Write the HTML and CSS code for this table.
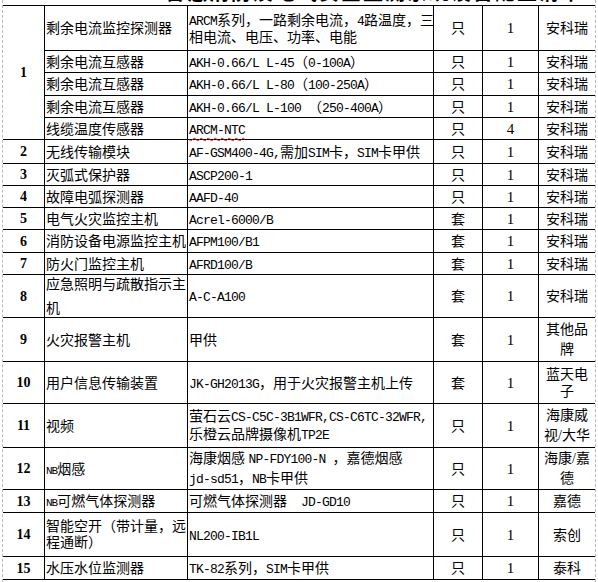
FILE: index.html
```html
<!DOCTYPE html>
<html lang="zh">
<head>
<meta charset="utf-8">
<title>设备配置清单</title>
<link rel="stylesheet" href="styles.css">
</head>
<body>
<div class="sheet">
  <div class="title"><span>智慧消防及电气安全监测系统设备配置清单</span></div>
  <table class="grid">
    <colgroup>
      <col class="c-no"><col class="c-name"><col class="c-model"><col class="c-unit"><col class="c-qty"><col class="c-brand">
    </colgroup>
    <tbody>
      <tr class="h46 first">
        <td class="no" rowspan="5">1</td>
        <td>剩余电流监控探测器</td>
        <td><span class="en">ARCM</span>系列，一路剩余电流，<span class="en">4</span>路温度，三<br>相电流、电压、功率、电能</td>
        <td class="ctr">只</td><td class="ctr qty">1</td><td class="ctr">安科瑞</td>
      </tr>
      <tr class="h22">
        <td>剩余电流互感器</td>
        <td><span class="en">AKH-0.66/L L-45</span>（<span class="en">0-100A</span>）</td>
        <td class="ctr">只</td><td class="ctr qty">1</td><td class="ctr">安科瑞</td>
      </tr>
      <tr class="h23">
        <td>剩余电流互感器</td>
        <td><span class="en">AKH-0.66/L L-80</span>（<span class="en">100-250A</span>）</td>
        <td class="ctr">只</td><td class="ctr qty">1</td><td class="ctr">安科瑞</td>
      </tr>
      <tr class="h22">
        <td>剩余电流互感器</td>
        <td><span class="en">AKH-0.66/L L-100 </span>（<span class="en">250-400A</span>）</td>
        <td class="ctr">只</td><td class="ctr qty">1</td><td class="ctr">安科瑞</td>
      </tr>
      <tr class="h22">
        <td>线缆温度传感器</td>
        <td><span class="en typo">ARCM-NTC</span></td>
        <td class="ctr">只</td><td class="ctr qty">4</td><td class="ctr">安科瑞</td>
      </tr>
      <tr class="h24">
        <td class="no">2</td>
        <td>无线传输模块</td>
        <td><span class="en">AF-GSM400-4G,</span>需加<span class="en">SIM</span>卡，<span class="en">SIM</span>卡甲供</td>
        <td class="ctr">只</td><td class="ctr qty">1</td><td class="ctr">安科瑞</td>
      </tr>
      <tr class="h22">
        <td class="no">3</td>
        <td>灭弧式保护器</td>
        <td><span class="en">ASCP200-1</span></td>
        <td class="ctr">只</td><td class="ctr qty">1</td><td class="ctr">安科瑞</td>
      </tr>
      <tr class="h22">
        <td class="no">4</td>
        <td>故障电弧探测器</td>
        <td><span class="en">AAFD-40</span></td>
        <td class="ctr">只</td><td class="ctr qty">1</td><td class="ctr">安科瑞</td>
      </tr>
      <tr class="h22">
        <td class="no">5</td>
        <td>电气火灾监控主机</td>
        <td><span class="en">Acrel-6000/B</span></td>
        <td class="ctr">套</td><td class="ctr qty">1</td><td class="ctr">安科瑞</td>
      </tr>
      <tr class="h23">
        <td class="no">6</td>
        <td>消防设备电源监控主机</td>
        <td><span class="en">AFPM100/B1</span></td>
        <td class="ctr">套</td><td class="ctr qty">1</td><td class="ctr">安科瑞</td>
      </tr>
      <tr class="h22">
        <td class="no">7</td>
        <td>防火门监控主机</td>
        <td><span class="en">AFRD100/B</span></td>
        <td class="ctr">套</td><td class="ctr qty">1</td><td class="ctr">安科瑞</td>
      </tr>
      <tr class="h43">
        <td class="no">8</td>
        <td><div class="spread"><div>应急照明与疏散指示主</div><div>机</div></div></td>
        <td><span class="en">A-C-A100</span></td>
        <td class="ctr">套</td><td class="ctr qty">1</td><td class="ctr">安科瑞</td>
      </tr>
      <tr class="h44">
        <td class="no">9</td>
        <td>火灾报警主机</td>
        <td>甲供</td>
        <td class="ctr">套</td><td class="ctr qty">1</td><td class="ctr lh20">其他品<br>牌</td>
      </tr>
      <tr class="h42">
        <td class="no">10</td>
        <td>用户信息传输装置</td>
        <td><span class="en">JK-GH2013G</span>，用于火灾报警主机上传</td>
        <td class="ctr">套</td><td class="ctr qty">1</td><td class="ctr">蓝天电<br>子</td>
      </tr>
      <tr class="h44">
        <td class="no">11</td>
        <td>视频</td>
        <td class="lh18">萤石云<span class="en">CS-C5C-3B1WFR,CS-C6TC-32WFR,</span><br>乐橙云品牌摄像机<span class="en">TP2E</span></td>
        <td class="ctr">只</td><td class="ctr qty">1</td><td class="ctr lh20">海康威<br>视/大华</td>
      </tr>
      <tr class="h41">
        <td class="no">12</td>
        <td><span class="en sm">NB</span>烟感</td>
        <td class="lh20">海康烟感 <span class="en">NP-FDY100-N </span>，嘉德烟感<br><span class="en">jd-sd51</span>，<span class="en">NB</span>卡甲供</td>
        <td class="ctr">只</td><td class="ctr qty">1</td><td class="ctr lh20">海康/嘉<br>德</td>
      </tr>
      <tr class="h23">
        <td class="no">13</td>
        <td><span class="en sm">NB</span>可燃气体探测器</td>
        <td>可燃气体探测器<span class="en">&nbsp;&nbsp;JD-GD10</span></td>
        <td class="ctr">只</td><td class="ctr qty">1</td><td class="ctr">嘉德</td>
      </tr>
      <tr class="h44">
        <td class="no">14</td>
        <td class="lh16">智能空开（带计量，远<br>程通断）</td>
        <td><span class="en">NL200-IB1L</span></td>
        <td class="ctr">只</td><td class="ctr qty">1</td><td class="ctr">索创</td>
      </tr>
      <tr class="h23">
        <td class="no">15</td>
        <td>水压水位监测器</td>
        <td><span class="en">TK-82</span>系列，<span class="en">SIM</span>卡甲供</td>
        <td class="ctr">只</td><td class="ctr qty">1</td><td class="ctr">泰科</td>
      </tr>
    </tbody>
  </table>
</div>
</body>
</html>
```

FILE: styles.css
```css
html, body {
  margin: 0;
  padding: 0;
  background: #ffffff;
}

.sheet {
  margin-left: 2px;
  width: 592px;
  min-height: 582px;
  border-left: 1px dashed #b8b8b8;
  border-right: 1px dashed #b8b8b8;
  box-sizing: content-box;
}

.title {
  height: 5px;
  overflow: hidden;
  padding-left: 162px;
}

.title span {
  display: block;
  margin-top: -18px;
  font-family: "Noto Sans CJK SC", sans-serif;
  font-weight: 700;
  font-size: 20px;
  line-height: 20px;
  letter-spacing: 2px;
  color: #000;
  white-space: nowrap;
}

.grid {
  border-collapse: separate;
  border-spacing: 0;
  table-layout: fixed;
  width: 592px;
}

.c-no { width: 42px; }
.c-name { width: 143px; }
.c-model { width: 246px; }
.c-unit { width: 49px; }
.c-qty { width: 56px; }
.c-brand { width: 56px; }

.grid td {
  box-sizing: border-box;
  border-right: 1px solid #000;
  border-bottom: 1px solid #000;
  padding: 1px 0 0 1px;
  vertical-align: middle;
  font-family: "Liberation Serif", "Noto Sans CJK SC", sans-serif;
  font-weight: 400;
  font-size: 14px;
  line-height: 17px;
  color: #000;
  white-space: nowrap;
  overflow: visible;
}

.grid td:last-child {
  border-right: none;
}

.grid tr.first td {
  border-top: 1px solid #000;
}

.grid td.no {
  text-align: center;
  padding: 0;
  font-weight: 700;
}

.grid td.ctr {
  text-align: center;
  padding: 1px 0 0 0;
}

.grid td.qty {
  font-size: 15px;
}

.grid td.lh16 { line-height: 16px; }
.grid td.lh18 { line-height: 18px; }
.grid td.lh20 { line-height: 20px; }

.spread {
  height: 41px;
  display: flex;
  flex-direction: column;
  justify-content: space-between;
}

.en {
  font-family: "Liberation Mono", monospace;
  font-weight: 400;
  font-size: 13px;
  line-height: 10px;
  letter-spacing: -0.8px;
}

.en.sm {
  font-size: 11px;
  letter-spacing: -1px;
}

.typo {
  text-decoration: underline wavy #e02020;
  text-decoration-thickness: 1px;
  text-underline-offset: 3px;
}

tr.h22 { height: 22px; }
tr.h23 { height: 23px; }
tr.h24 { height: 24px; }
tr.h41 { height: 41px; }
tr.h42 { height: 42px; }
tr.h43 { height: 43px; }
tr.h44 { height: 44px; }
tr.h46 { height: 46px; }
```
